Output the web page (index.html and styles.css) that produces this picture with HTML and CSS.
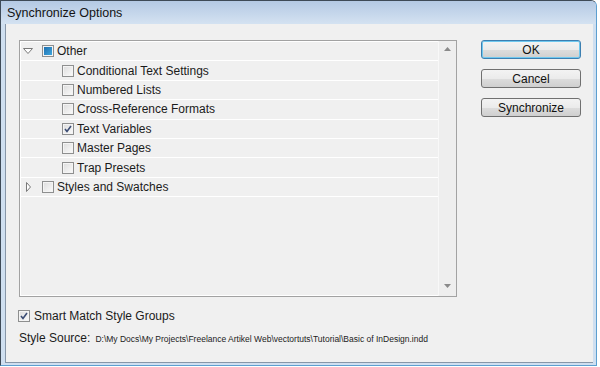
FILE: index.html
```html
<!DOCTYPE html>
<html lang="en">
<head>
<meta charset="utf-8">
<title>Synchronize Options</title>
<link rel="stylesheet" href="styles.css">
</head>
<body>
<div class="window">
  <div class="titlebar">Synchronize Options</div>
  <div class="client">
    <div class="main">
      <div class="list">
        <div class="rows">
          <div class="row group">
            <svg class="twisty" width="12" height="12" viewBox="0 0 12 12"><path d="M1.5 3.5 H10.5 L6 8.5 Z" fill="#fff" stroke="#7a7a7a"/></svg>
            <span class="box mixed"></span><span class="label">Other</span>
          </div>
          <div class="row child"><span class="box"></span><span class="label">Conditional Text Settings</span></div>
          <div class="row child"><span class="box"></span><span class="label">Numbered Lists</span></div>
          <div class="row child"><span class="box"></span><span class="label">Cross-Reference Formats</span></div>
          <div class="row child">
            <span class="box checked"><svg width="10" height="10" viewBox="0 0 10 10"><path d="M2 5 L4 7.5 L8 2" fill="none" stroke="#3b4c74" stroke-width="1.6"/></svg></span>
            <span class="label">Text Variables</span>
          </div>
          <div class="row child"><span class="box"></span><span class="label">Master Pages</span></div>
          <div class="row child"><span class="box"></span><span class="label">Trap Presets</span></div>
          <div class="row group">
            <svg class="twisty" width="12" height="12" viewBox="0 0 12 12"><path d="M4.5 1.5 V10.5 L8.5 6 Z" fill="#fff" stroke="#7a7a7a"/></svg>
            <span class="box"></span><span class="label">Styles and Swatches</span>
          </div>
        </div>
        <div class="scrollbar">
          <svg width="7" height="4" viewBox="0 0 7 4"><path d="M0 4 L3.5 0 L7 4 Z" fill="#8a8a8a"/></svg>
          <svg width="7" height="4" viewBox="0 0 7 4"><path d="M0 0 L3.5 4 L7 0 Z" fill="#8a8a8a"/></svg>
        </div>
      </div>
      <div class="buttons">
        <button class="btn default">OK</button>
        <button class="btn">Cancel</button>
        <button class="btn">Synchronize</button>
      </div>
    </div>
    <div class="smart">
      <span class="box checked"><svg width="10" height="10" viewBox="0 0 10 10"><path d="M2 5 L4 7.5 L8 2" fill="none" stroke="#3b4c74" stroke-width="1.6"/></svg></span>
      <span class="label">Smart Match Style Groups</span>
    </div>
    <div class="source">
      <span class="label">Style Source:</span>
      <span class="path">D:\My Docs\My Projects\Freelance Artikel Web\vectortuts\Tutorial\Basic of InDesign.indd</span>
    </div>
  </div>
</div>
</body>
</html>
```

FILE: styles.css
```css
html, body {
  margin: 0;
  padding: 0;
  background: #ffffff;
}

body {
  font-family: "Liberation Sans", Arial, sans-serif;
  font-size: 12px;
  color: #1b1b1b;
}

.window {
  width: 597px;
  height: 366px;
  box-sizing: border-box;
  display: flex;
  flex-direction: column;
  background: #cfdff0;
  border-left: 1px solid #3e4a57;
  border-top: 1px solid #3e4a57;
  border-right: 1px solid #5d9fd0;
  border-bottom: 1px solid #5d9fd0;
  border-top-right-radius: 6px;
}

.titlebar {
  height: 23px;
  padding-left: 6px;
  line-height: 24px;
  font-size: 12.5px;
  color: #141414;
  background: linear-gradient(#b4c9e4, #d4e2f1);
  border-top-right-radius: 5px;
}

.client {
  flex: 1;
  margin: 0 3px 2px 4px;
  padding: 16px 0 0 13px;
  background: #f0f0f0;
  border-left: 1px solid #8796a8;
  border-bottom: 1px solid #8796a8;
}

.main {
  display: flex;
  gap: 24px;
}

.list {
  width: 438px;
  height: 257px;
  box-sizing: border-box;
  display: flex;
  border: 1px solid #a2a2a2;
  box-shadow: inset 0 0 0 1px #ffffff;
  background: #f0f0f0;
}

.rows {
  flex: 1;
  padding-top: 1px;
}

.row {
  height: 19.4px;
  box-sizing: border-box;
  display: flex;
  align-items: center;
  border-bottom: 1px solid #ffffff;
}

.row.group {
  padding-left: 2px;
}

.row.child {
  padding-left: 42px;
}

.twisty {
  margin-right: 8px;
}

.box {
  width: 12px;
  height: 12px;
  box-sizing: border-box;
  display: inline-flex;
  align-items: center;
  justify-content: center;
  border: 1px solid #8e8f8f;
  background: linear-gradient(135deg, #dcdcdc, #fbfbfb);
  box-shadow: inset 0 0 0 1px #f4f4f4;
  margin-right: 3px;
}

.box.mixed {
  background: #f4f4f4;
}

.box.mixed::after {
  content: "";
  width: 8px;
  height: 8px;
  background: linear-gradient(135deg, #1e6fb0, #3fa6dc);
}

.scrollbar {
  width: 17px;
  display: flex;
  flex-direction: column;
  justify-content: space-between;
  align-items: center;
  padding: 6px 0 8px;
  background: #eeeeee;
  border-left: 1px solid #f8f8f8;
}

.buttons {
  display: flex;
  flex-direction: column;
  gap: 10px;
}

.btn {
  width: 100px;
  height: 19px;
  padding: 0;
  font-family: "Liberation Sans", Arial, sans-serif;
  font-size: 12px;
  color: #111111;
  border: 1px solid #707070;
  border-radius: 3px;
  background: linear-gradient(#f3f3f3 0%, #ebebeb 50%, #dddddd 51%, #cfcfcf 100%);
}

.btn.default {
  border-color: #3c7fb1;
  box-shadow: inset 0 0 0 1px #6fc8ef;
}

.smart {
  display: flex;
  align-items: center;
  margin-top: 13px;
  margin-left: -1px;
  height: 12px;
}

.smart .box {
  margin-right: 4px;
}

.source {
  display: flex;
  align-items: baseline;
  margin-top: 9px;
  height: 14px;
}

.source .label {
  margin-right: 5px;
}

.path {
  font-size: 8.5px;
  color: #222222;
}
```
